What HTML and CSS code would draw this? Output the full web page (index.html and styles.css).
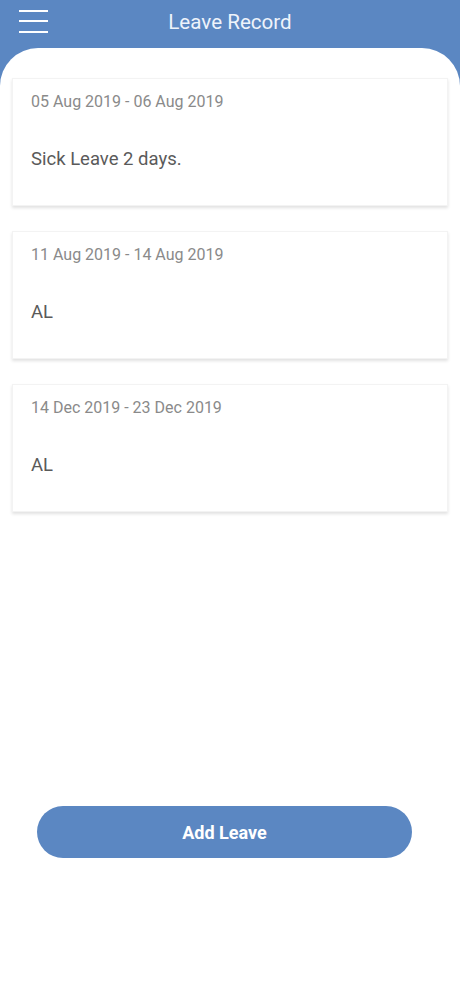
FILE: index.html
```html
<!DOCTYPE html>
<html lang="en">

<head>
    <meta charset="UTF-8">
    <meta name="viewport" content="width=device-width, initial-scale=1.0">
    <title>Leave Record</title>

    <link rel="stylesheet" href="styles.css">
</head>

<body>
    <div class="app">
        <div class="topBar">
            <div class="menuBtn">
                <svg width="29" height="24" viewBox="0 0 29 24">
                    <rect x="0" y="1" width="29" height="2" fill="#fff"></rect>
                    <rect x="0" y="11" width="29" height="2" fill="#fff"></rect>
                    <rect x="0" y="22" width="29" height="2" fill="#fff"></rect>
                </svg>
            </div>
            <h1>Leave Record</h1>
        </div>

        <div class="panel">
            <div class="list">
                <div class="card">
                    <div class="date">05 Aug 2019 - 06 Aug 2019</div>
                    <div class="reason">Sick Leave 2 days.</div>
                </div>
                <div class="card">
                    <div class="date">11 Aug 2019 - 14 Aug 2019</div>
                    <div class="reason">AL</div>
                </div>
                <div class="card">
                    <div class="date">14 Dec 2019 - 23 Dec 2019</div>
                    <div class="reason">AL</div>
                </div>
            </div>

            <div class="actions">
                <button class="addBtn">Add Leave</button>
            </div>
        </div>
    </div>
</body>

</html>
```

FILE: styles.css
```css
body {
    margin: 0;
    font-family: Roboto, "Liberation Sans", sans-serif;
    background-color: #5b87c2;
}

.app {
    height: 996px;
    display: flex;
    flex-direction: column;
}

.topBar {
    height: 48px;
    position: relative;
    display: flex;
    align-items: center;
    justify-content: center;
}

.menuBtn {
    position: absolute;
    left: 19px;
    top: 9px;
    line-height: 0;
}

.topBar h1 {
    margin: 0 0 4px 0;
    font-size: 20.6px;
    font-weight: normal;
    color: #eef3fb;
}

.panel {
    flex: 1;
    background-color: #fff;
    border-radius: 38px 38px 0 0;
    padding: 30px 12px 0 12px;
    display: flex;
    flex-direction: column;
}

.list {
    display: flex;
    flex-direction: column;
    gap: 25px;
}

.card {
    height: 128px;
    box-sizing: border-box;
    padding: 13px 18px;
    border: 1px solid #f3f3f3;
    box-shadow: 0 2px 3px rgba(0, 0, 0, 0.12);
}

.date {
    font-size: 16px;
    line-height: 19px;
    color: #8a8a8a;
}

.reason {
    margin-top: 37px;
    font-size: 18.5px;
    line-height: 22px;
    color: #5a5a5a;
}

.actions {
    margin-top: 294px;
    padding-left: 25px;
}

.addBtn {
    width: 375px;
    height: 52px;
    border: 0;
    border-radius: 26px;
    background-color: #5b87c2;
    color: #fff;
    font-family: Roboto, "Liberation Sans", sans-serif;
    font-size: 18px;
    font-weight: bold;
}
```
